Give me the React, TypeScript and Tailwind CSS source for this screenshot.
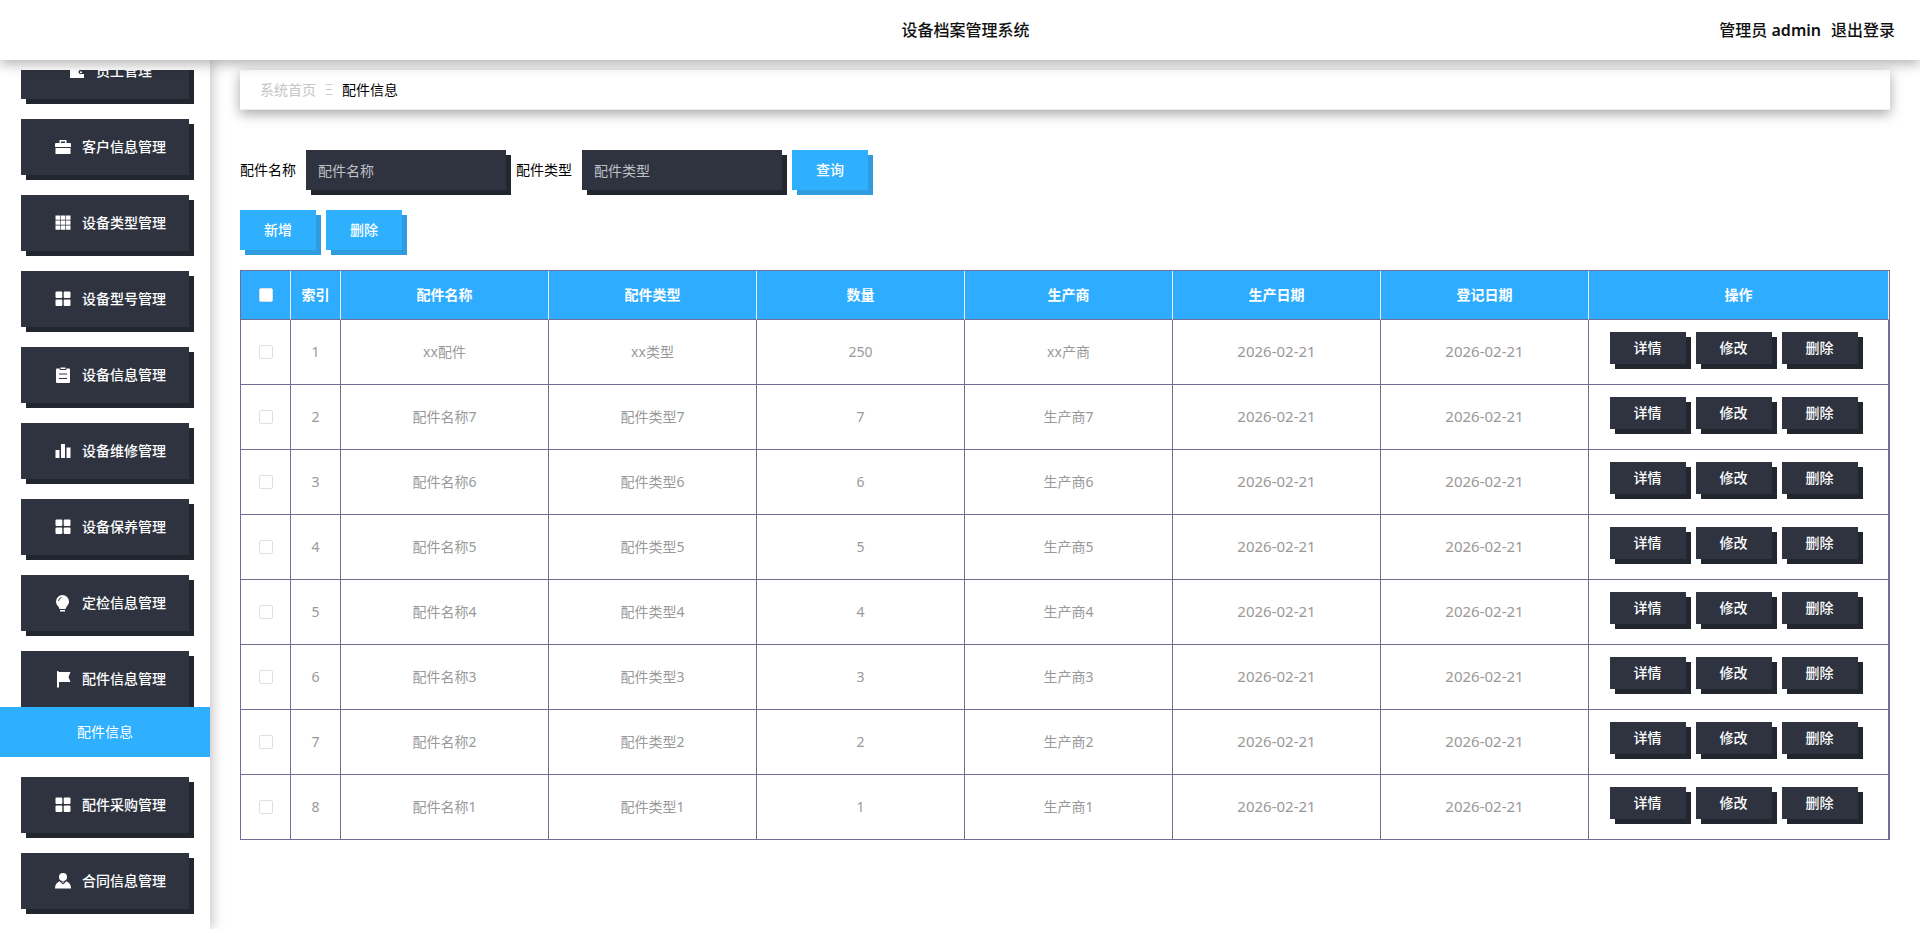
import { ReactNode, useState } from "react";

interface MenuItem {
  title: string;
  icon: ReactNode;
  children?: string[];
}

interface Part {
  id: number;
  name: string;
  type: string;
  count: number;
  maker: string;
  madeAt: string;
  addedAt: string;
}

const gridIcon = (
  <>
    <rect x=".5" y=".5" width="6.800" height="6.500" rx="1" />
    <rect x="8.700" y=".5" width="6.800" height="6.500" rx="1" />
    <rect x=".5" y="8.500" width="6.800" height="6.500" rx="1" />
    <rect x="8.700" y="8.500" width="6.800" height="6.500" rx="1" />
  </>
);

const menu: MenuItem[] = [
  {
    title: "员工管理",
    icon: <path d="M1 1h14v6h-3.5a2 2 0 0 0 0 4H15v4H1zM11 8.5h2v1.5h-2z" />,
  },
  {
    title: "客户信息管理",
    icon: (
      <path d="M4.5 4V1h7v3H15a1 1 0 0 1 1 1v3H0V5a1 1 0 0 1 1-1zM6 4h4V2.500H6zM.5 9h15v6H.5z" />
    ),
  },
  {
    title: "设备类型管理",
    icon: (
      <path d="M.5 .5h4.600v4.300H.5zM5.700 .5h4.600v4.300H5.700zM10.900 .5h4.600v4.300h-4.600zM.5 5.500h4.600v4.300H.5zM5.700 5.500h4.600v4.300H5.700zM10.900 5.500h4.600v4.300h-4.600zM.5 10.500h4.600v4.300H.5zM5.700 10.500h4.600v4.300H5.700zM10.900 10.500h4.600v4.300h-4.600z" />
    ),
  },
  { title: "设备型号管理", icon: gridIcon },
  {
    title: "设备信息管理",
    icon: (
      <path
        fillRule="evenodd"
        d="M2 1.500h2.500L5 3h6l.5-1.500H14a1 1 0 0 1 1 1V15a1 1 0 0 1-1 1H2a1 1 0 0 1-1-1V2.500a1 1 0 0 1 1-1zM4 7.500h8v-1H4zM4 12h8v-1H4zM5.500 .5h5V2h-5z"
      />
    ),
  },
  {
    title: "设备维修管理",
    icon: <path d="M.5 7h4v8h-4zM6 1h4v14H6zM11.500 4.500h4V15h-4z" />,
  },
  { title: "设备保养管理", icon: gridIcon },
  {
    title: "定检信息管理",
    icon: (
      <>
        <path d="M7.500 0a6.500 6.500 0 0 1 6.500 6.500c0 2.500-1.300 4-2.500 5.200L10.500 14h-6l-1-2.300C2.300 10.500 1 9 1 6.500A6.500 6.500 0 0 1 7.500 0zM5 15h5v1.500H5z" />
        <path d="M3.500 6a4 4 0 0 1 3-3.500" fill="none" stroke="#2e333f" />
      </>
    ),
  },
  {
    title: "配件信息管理",
    icon: <path d="M2 0h1.500v1H15.500l-2 5 2 5H4v5.500H2z" />,
    children: ["配件信息"],
  },
  { title: "配件采购管理", icon: gridIcon },
  {
    title: "合同信息管理",
    icon: (
      <>
        <circle cx="8" cy="4" r="4" />
        <path d="M4.500 8.300L8 11.500l3.500-3.200C14.500 9.500 16 12 16 15.500H0C0 12 1.500 9.500 4.500 8.300z" />
        <path d="M6.500 8.500h3L8 10z" />
      </>
    ),
  },
];

const date = "2026-02-21";

const parts: Part[] = [
  { id: 1, name: "xx配件", type: "xx类型", count: 250, maker: "xx产商", madeAt: date, addedAt: date },
  { id: 2, name: "配件名称7", type: "配件类型7", count: 7, maker: "生产商7", madeAt: date, addedAt: date },
  { id: 3, name: "配件名称6", type: "配件类型6", count: 6, maker: "生产商6", madeAt: date, addedAt: date },
  { id: 4, name: "配件名称5", type: "配件类型5", count: 5, maker: "生产商5", madeAt: date, addedAt: date },
  { id: 5, name: "配件名称4", type: "配件类型4", count: 4, maker: "生产商4", madeAt: date, addedAt: date },
  { id: 6, name: "配件名称3", type: "配件类型3", count: 3, maker: "生产商3", madeAt: date, addedAt: date },
  { id: 7, name: "配件名称2", type: "配件类型2", count: 2, maker: "生产商2", madeAt: date, addedAt: date },
  { id: 8, name: "配件名称1", type: "配件类型1", count: 1, maker: "生产商1", madeAt: date, addedAt: date },
];

const columns = ["索引", "配件名称", "配件类型", "数量", "生产商", "生产日期", "登记日期", "操作"];

function Header() {
  return (
    <header className="relative z-10 grid h-[60px] shrink-0 grid-cols-3 items-center bg-white pr-[25px] pl-9 text-base font-medium text-[#111] shadow-[0_4px_12px_rgba(0,0,0,0.3)]">
      <h1 className="col-start-2 text-center">设备档案管理系统</h1>
      <div className="flex justify-end gap-2.5">
        <span>
          管理员 <span className="font-semibold">admin</span>
        </span>
        <button type="button">退出登录</button>
      </div>
    </header>
  );
}

function Sidebar() {
  return (
    <aside className="flex w-[210px] shrink-0 flex-col pt-2.5 shadow-[2px_0_12px_rgba(0,0,0,0.25)]">
      <nav className="min-h-0 flex-1 overflow-hidden">
        {/* list is scrolled down a little */}
        <ul className="-mt-[27px]">
          {menu.map((item) => (
            <li key={item.title} className="mb-5">
              <button
                type="button"
                className="mx-[21px] flex h-14 w-[168px] items-center justify-center gap-[11px] bg-[#2e333f] pl-[11px] text-sm font-medium text-white shadow-[5px_5px_0_#22272f]"
              >
                <svg viewBox="0 0 16 16" className="h-4 w-4 overflow-visible" fill="currentColor" fillRule="evenodd">
                  {item.icon}
                </svg>
                {item.title}
              </button>
              {item.children?.map((child) => (
                <a
                  key={child}
                  href="#"
                  className="relative flex h-[50px] items-center justify-center bg-[#2eb0ff] text-sm text-white"
                >
                  {child}
                </a>
              ))}
            </li>
          ))}
        </ul>
      </nav>
    </aside>
  );
}

function Field({ id, label }: { id: string; label: string }) {
  return (
    <div className="flex items-center gap-2.5">
      <label htmlFor={id}>{label}</label>
      <input
        id={id}
        placeholder={label}
        className="h-10 w-[200px] bg-[#2e333f] px-3 text-white shadow-[5px_5px_0_#22272f] outline-none placeholder:text-[#bfc1c6]"
      />
    </div>
  );
}

function BlueButton({ children }: { children: ReactNode }) {
  return (
    <button type="button" className="h-10 w-[76px] bg-[#2eb0ff] font-medium text-white shadow-[5px_5px_0_#2e9cde]">
      {children}
    </button>
  );
}

function RowButton({ children }: { children: ReactNode }) {
  return (
    <button type="button" className="h-8 w-[76px] bg-[#2e333f] font-medium text-white shadow-[5px_5px_0_#22272f]">
      {children}
    </button>
  );
}

function Check({ label, checked, onChange }: { label: string; checked: boolean; onChange: () => void }) {
  return (
    <input
      type="checkbox"
      aria-label={label}
      checked={checked}
      onChange={onChange}
      className="mx-auto block h-3.5 w-3.5 appearance-none rounded-xs border border-[#dcdfe6] bg-white checked:bg-[#2eb0ff]"
    />
  );
}

function PartsTable() {
  const [selected, setSelected] = useState<number[]>([]);
  const all = selected.length === parts.length;

  const toggle = (id: number) =>
    setSelected((s) => (s.includes(id) ? s.filter((x) => x !== id) : [...s, id]));

  return (
    <div className="border-t border-r border-l border-[#706d98]">
      <table className="w-full table-fixed border-separate border-spacing-0 text-center">
        <colgroup>
          <col className="w-[50px]" />
          <col className="w-[50px]" />
          <col span={6} />
          <col className="w-[300px]" />
        </colgroup>
        <thead>
          <tr className="h-[49px] bg-[#2eacff] text-white">
            <th className="border-r border-b border-r-[#eee] border-b-[#706d98]">
              <Check
                label="全选"
                checked={all}
                onChange={() => setSelected(all ? [] : parts.map((p) => p.id))}
              />
            </th>
            {columns.map((c) => (
              <th key={c} className="border-r border-b border-r-[#eee] border-b-[#706d98] font-bold">
                {c}
              </th>
            ))}
          </tr>
        </thead>
        <tbody className="text-[#999] [&_td]:border-r [&_td]:border-b [&_td]:border-[#706d98]">
          {parts.map((p) => (
            <tr key={p.id} className="h-[65px]">
              <td>
                <Check label={p.name} checked={selected.includes(p.id)} onChange={() => toggle(p.id)} />
              </td>
              <td>{p.id}</td>
              <td>{p.name}</td>
              <td>{p.type}</td>
              <td>{p.count}</td>
              <td>{p.maker}</td>
              <td className="text-[15px]">{p.madeAt}</td>
              <td className="text-[15px]">{p.addedAt}</td>
              <td>
                <div className="mb-2 flex justify-center gap-2.5 pr-2.5">
                  <RowButton>详情</RowButton>
                  <RowButton>修改</RowButton>
                  <RowButton>删除</RowButton>
                </div>
              </td>
            </tr>
          ))}
        </tbody>
      </table>
    </div>
  );
}

export default function App() {
  return (
    <div className="flex h-screen flex-col overflow-hidden bg-white font-['Noto_Sans','Noto_Sans_CJK_SC',sans-serif] text-sm text-black">
      <Header />
      <div className="flex min-h-0 flex-1">
        <Sidebar />
        <main className="min-w-0 flex-1 px-[30px] pt-2.5">
          <nav className="flex h-10 items-center gap-2 border-b border-[#eee] bg-white px-5 shadow-[0_4px_12px_rgba(0,0,0,0.35)]">
            <a href="#" className="text-[#c5c5c5]">
              系统首页
            </a>
            <span className="w-2.5 text-center font-light text-[#c5c5c5]">Ξ</span>
            <span>配件信息</span>
          </nav>
          <form className="mt-10 flex gap-2.5" onSubmit={(e) => e.preventDefault()}>
            <Field id="part-name" label="配件名称" />
            <Field id="part-type" label="配件类型" />
            <BlueButton>查询</BlueButton>
          </form>
          <div className="mt-5 mb-5 flex gap-2.5">
            <BlueButton>新增</BlueButton>
            <BlueButton>删除</BlueButton>
          </div>
          <PartsTable />
        </main>
      </div>
    </div>
  );
}
